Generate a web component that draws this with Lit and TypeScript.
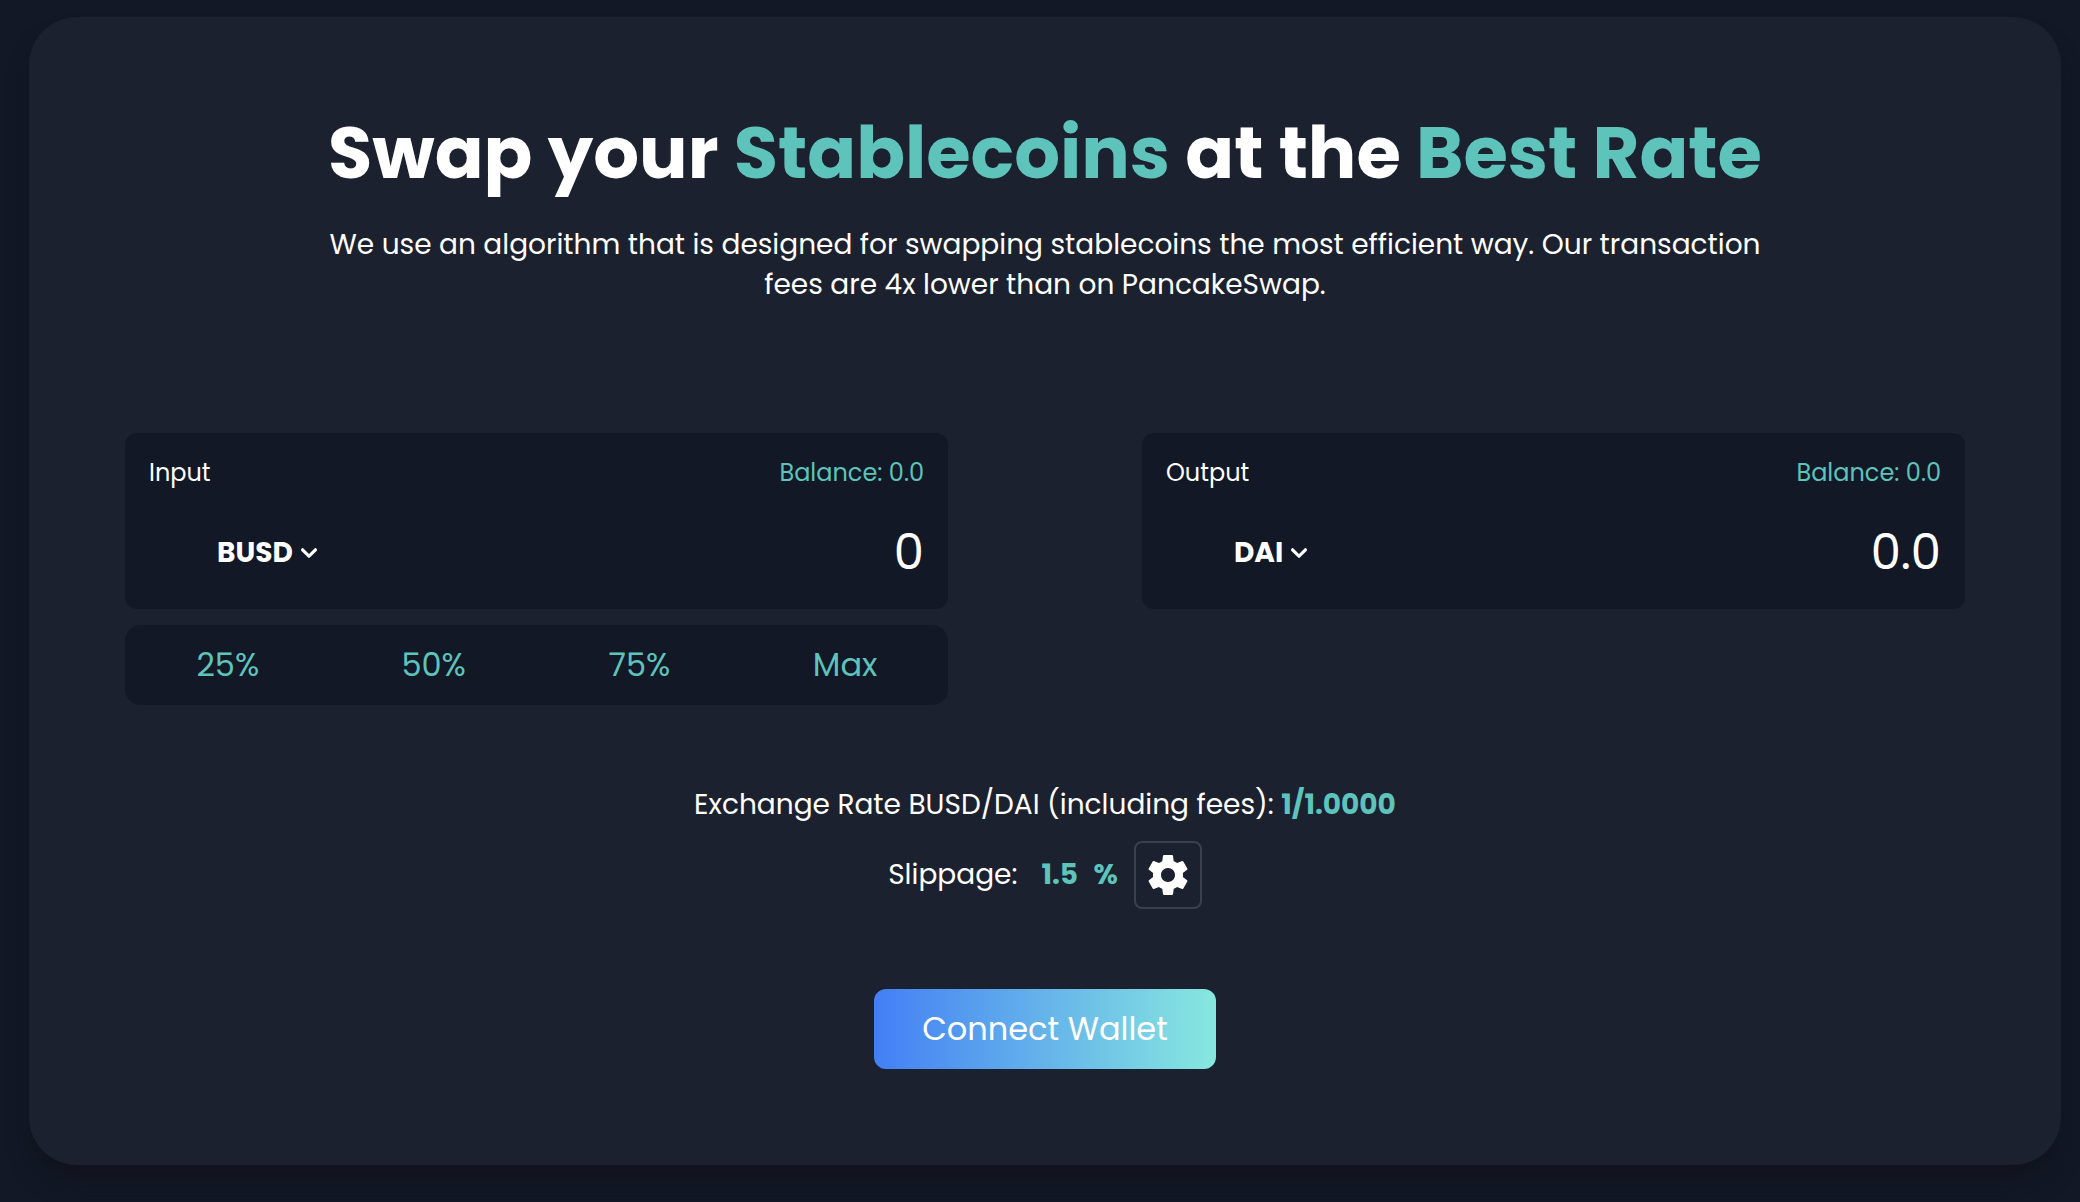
import { LitElement, html, css } from "lit";
import { customElement, property, state } from "lit/decorators.js";

const TOKENS = ["BUSD", "DAI", "USDC", "USDT"];

@customElement("token-panel")
export class TokenPanel extends LitElement {
  @property() label = "";
  @property() token = "";
  @property() amount = "";
  @property({ type: Boolean }) locked = false;

  static styles = css`
    :host {
      display: block;
    }
    .panel {
      display: flex;
      flex-direction: column;
      gap: 24px;
      padding: 24px 24px 16px;
      border-radius: 12px;
      background: #121826;
    }
    .line {
      display: flex;
      align-items: center;
      justify-content: space-between;
    }
    .caption {
      font-size: 24px;
      line-height: 32px;
    }
    .balance {
      color: #5ec3bb;
    }
    .picker {
      display: grid;
      align-items: center;
      margin-left: 68px;
    }
    .token,
    .chevron {
      grid-area: 1 / 1;
    }
    .token {
      appearance: none;
      field-sizing: content;
      margin: 0;
      padding: 0 32px 0 0;
      border: 0;
      background: transparent;
      color: inherit;
      font: inherit;
      font-size: 28px;
      line-height: 40px;
      font-weight: 700;
      cursor: pointer;
    }
    .chevron {
      justify-self: end;
      width: 32px;
      height: 32px;
      pointer-events: none;
    }
    .amount {
      flex: 1;
      min-width: 0;
      height: 80px;
      padding: 0;
      border: 0;
      background: transparent;
      color: inherit;
      font: inherit;
      font-size: 48px;
      text-align: right;
    }
  `;

  render() {
    return html`
      <section class="panel">
        <div class="line">
          <label class="caption" for="amount">${this.label}</label>
          <span class="caption balance">Balance: 0.0</span>
        </div>
        <div class="line">
          <div class="picker">
            <select class="token" aria-label="${this.label} token">
              ${TOKENS.map(
                (t) => html`<option ?selected=${t === this.token}>${t}</option>`
              )}
            </select>
            <svg class="chevron" viewBox="0 0 20 20" aria-hidden="true">
              <path
                d="M5.293 7.293a1 1 0 011.414 0L10 10.586l3.293-3.293a1 1 0 111.414 1.414l-4 4a1 1 0 01-1.414 0l-4-4a1 1 0 010-1.414z"
                fill="#fff"
              />
            </svg>
          </div>
          <input
            class="amount"
            id="amount"
            type="text"
            inputmode="decimal"
            .value=${this.amount}
            ?readonly=${this.locked}
          />
        </div>
      </section>
    `;
  }
}

@customElement("app-root")
export class AppRoot extends LitElement {
  @state() private slippage = "1.5";

  static styles = css`
    :host {
      display: block;
      box-sizing: border-box;
      min-height: 100vh;
      padding: 17px 19px 37px 29px;
      background: #121826;
      color: #fff;
      font-family: Poppins, Inter, "Liberation Sans", sans-serif;
    }
    .card {
      display: flex;
      flex-direction: column;
      align-items: center;
      padding: 96px;
      border-radius: 48px;
      background: #1b212e;
      box-shadow: 0 20px 25px -5px rgba(17, 17, 22, 0.6);
    }
    .title {
      margin: 0;
      font-size: 72px;
      line-height: 80px;
      font-weight: 700;
      text-align: center;
    }
    .accent {
      color: #5ec3bb;
    }
    .intro {
      max-width: 1440px;
      margin: 32px 0 128px;
      font-size: 28px;
      line-height: 40px;
      text-align: center;
    }
    .swap {
      display: grid;
      grid-template-columns: repeat(2, minmax(0, 1fr));
      gap: 16px 194px;
      width: 100%;
    }
    .shares {
      display: grid;
      grid-template-columns: repeat(4, 1fr);
      border-radius: 16px;
      background: #121826;
    }
    .share {
      height: 80px;
      padding: 0;
      border: 0;
      background: transparent;
      color: #5ec3bb;
      font: inherit;
      font-size: 32px;
      cursor: pointer;
    }
    .rate {
      margin: 80px 0 16px;
      font-size: 28px;
      line-height: 40px;
    }
    .strong {
      color: #5ec3bb;
      font-weight: 700;
    }
    .slippage {
      display: flex;
      align-items: center;
      gap: 16px;
      font-size: 28px;
      line-height: 40px;
    }
    .percent {
      width: 36px;
      padding: 0 0 0 8px;
      border: 0;
      background: transparent;
      font: inherit;
      font-weight: 700;
    }
    .settings {
      display: grid;
      place-items: center;
      width: 68px;
      height: 68px;
      padding: 0;
      border: 2px solid #3a404d;
      border-radius: 8px;
      background: transparent;
      cursor: pointer;
    }
    .gear {
      width: 48px;
      height: 48px;
    }
    .connect {
      height: 80px;
      margin-top: 80px;
      padding: 0 48px;
      border: 0;
      border-radius: 12px;
      background: linear-gradient(90deg, #437ff5, #87e8df);
      color: #fff;
      font: inherit;
      font-size: 32px;
      cursor: pointer;
    }
  `;

  private onSlippage(e: Event) {
    this.slippage = (e.target as HTMLInputElement).value;
  }

  render() {
    return html`
      <main class="card">
        <h1 class="title">
          Swap your <span class="accent">Stablecoins</span> at the
          <span class="accent">Best Rate</span>
        </h1>
        <p class="intro">
          We use an algorithm that is designed for swapping stablecoins the most
          efficient way. Our transaction fees are 4x lower than on PancakeSwap.
        </p>
        <div class="swap">
          <token-panel label="Input" token="BUSD" amount="0"></token-panel>
          <token-panel label="Output" token="DAI" amount="0.0" locked></token-panel>
          <div class="shares">
            ${["25%", "50%", "75%", "Max"].map(
              (s) => html`<button class="share" type="button">${s}</button>`
            )}
          </div>
        </div>
        <p class="rate">
          Exchange Rate BUSD/DAI (including fees):
          <span class="strong">1/1.0000</span>
        </p>
        <div class="slippage">
          <label for="slippage">Slippage:</label>
          <input
            class="percent strong"
            id="slippage"
            type="text"
            inputmode="decimal"
            .value=${this.slippage}
            @input=${this.onSlippage}
          />
          <span class="strong">%</span>
          <button class="settings" type="button" aria-label="Slippage settings">
            <svg class="gear" viewBox="0 0 24 24" fill="#fff" aria-hidden="true">
              <path
                d="M19.43 12.98c.04-.32.07-.64.07-.98s-.03-.66-.07-.98l2.11-1.65c.19-.15.24-.42.12-.64l-2-3.46c-.12-.22-.39-.3-.61-.22l-2.49 1c-.52-.4-1.08-.73-1.69-.98l-.38-2.65C14.46 2.18 14.25 2 14 2h-4c-.25 0-.46.18-.49.42l-.38 2.65c-.61.25-1.17.59-1.69.98l-2.49-1c-.23-.09-.49 0-.61.22l-2 3.46c-.13.22-.07.49.12.64l2.11 1.65c-.04.32-.07.65-.07.98s.03.66.07.98l-2.11 1.65c-.19.15-.24.42-.12.64l2 3.46c.12.22.39.3.61.22l2.49-1c.52.4 1.08.73 1.69.98l.38 2.65c.03.24.24.42.49.42h4c.25 0 .46-.18.49-.42l.38-2.65c.61-.25 1.17-.59 1.69-.98l2.49 1c.23.09.49 0 .61-.22l2-3.46c.12-.22.07-.49-.12-.64l-2.11-1.65zM12 15.5c-1.93 0-3.5-1.57-3.5-3.5s1.57-3.5 3.5-3.5 3.5 1.57 3.5 3.5-1.57 3.5-3.5 3.5z"
              />
            </svg>
          </button>
        </div>
        <button class="connect" type="button">Connect Wallet</button>
      </main>
    `;
  }
}
